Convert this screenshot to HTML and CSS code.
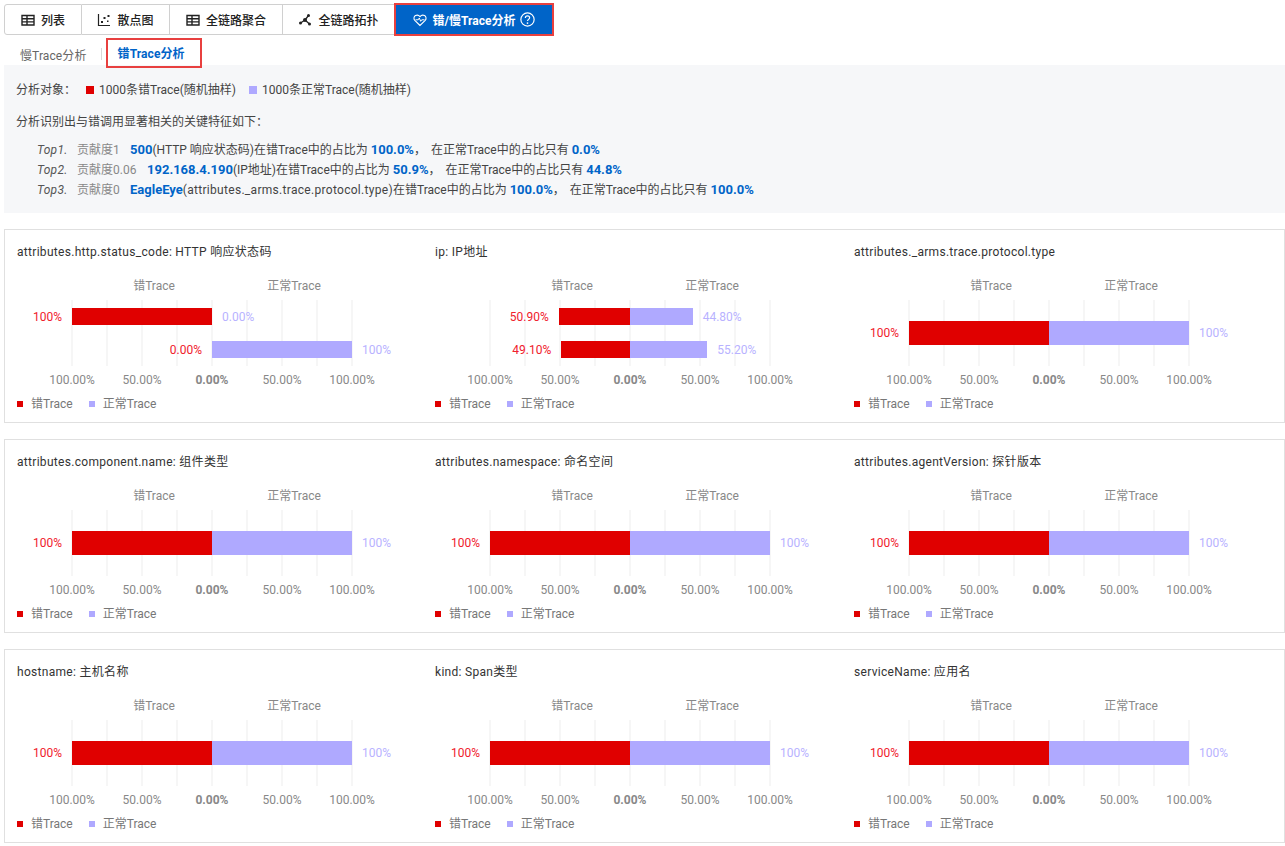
FILE: index.html
```html
<!DOCTYPE html>
<html lang="zh-CN">
<head>
    <meta charset="UTF-8">
    <title>错/慢Trace分析</title>
    <link rel="stylesheet" href="styles.css">
</head>
<body>
    <svg class="defs" width="0" height="0">
        <symbol id="i-table" viewBox="0 0 14 14">
            <path d="M1 2.500h12v9.500H1zM1 5.800h12M1 8.900h12M6 2.500V12" fill="none" stroke="#222" stroke-width="1.400"/>
        </symbol>
    </svg>
    <nav class="tabs">
        <a class="tab tab-list"><svg class="icon"><use href="#i-table"/></svg>列表</a>
        <a class="tab tab-scatter">
            <svg class="icon" viewBox="0 0 14 14"><path d="M1.500 1v11.500H13" fill="none" stroke="#222" stroke-width="1.200"/><path d="M4 8h2v2H4zM6.500 4h2v2h-2zM10.500 2h2v2h-2zM10 7.500h1.500V9H10z" fill="#222"/></svg>散点图
        </a>
        <a class="tab tab-agg"><svg class="icon"><use href="#i-table"/></svg>全链路聚合</a>
        <a class="tab tab-topo">
            <svg class="icon" viewBox="0 0 14 14"><path d="M7 7L10.500 2.500M7 7L2.500 10M7 7l4.500 4" stroke="#222" stroke-width="1.300"/><circle cx="7" cy="7" r="2" fill="#222"/><circle cx="10.500" cy="2.500" r="1.500" fill="#222"/><circle cx="2.500" cy="10" r="1.500" fill="#222"/><circle cx="11.500" cy="11" r="1.500" fill="#222"/></svg>全链路拓扑
        </a>
        <a class="tab tab-active">
            <svg class="icon" viewBox="0 0 14 14"><path d="M7 12.500L1.800 7.400C.4 5.900.8 3.500 2.500 2.600 4.100 1.800 5.800 2.200 7 3.600 8.200 2.200 9.900 1.800 11.500 2.600c1.700.9 2.100 3.300.7 4.800z" fill="none" stroke="#fff" stroke-width="1.100"/><path d="M2.500 6.800h2.700L6.300 5l1.400 3.300 1-1.500h2.800" fill="none" stroke="#fff" stroke-width="1"/></svg>错/慢Trace分析
            <svg class="icon icon-help" viewBox="0 0 14 14"><circle cx="7" cy="7" r="6.200" fill="none" stroke="#fff" stroke-width="1.100"/><path d="M5 5.500C5 4.300 5.900 3.600 7 3.600s2 .7 2 1.800c0 1.500-2 1.500-2 3.100" fill="none" stroke="#fff" stroke-width="1.100"/><circle cx="7" cy="10.300" r=".8" fill="#fff"/></svg>
        </a>
    </nav>

    <div class="subtabs">
        <a class="subtab">慢Trace分析</a>
        <span class="subtab-sep"></span>
        <a class="subtab subtab-active">错Trace分析</a>
    </div>

    <section class="summary">
        <p class="summary-line">分析对象：
            <span class="swatch swatch-err"></span>1000条错Trace(随机抽样)
            <span class="swatch swatch-ok"></span>1000条正常Trace(随机抽样)
        </p>
        <p class="summary-line">分析识别出与错调用显著相关的关键特征如下：</p>
        <ul class="tops">
            <li><i>Top1.</i><span class="score score-1">贡献度1</span><b>500</b>(HTTP 响应状态码)在错Trace中的占比为 <b>100.0%</b><span class="comma">，</span>在正常Trace中的占比只有 <b>0.0%</b></li>
            <li><i>Top2.</i><span class="score score-2">贡献度0.06</span><b>192.168.4.190</b>(IP地址)在错Trace中的占比为 <b>50.9%</b><span class="comma">，</span>在正常Trace中的占比只有 <b>44.8%</b></li>
            <li><i>Top3.</i><span class="score score-1">贡献度0</span><b>EagleEye</b><span class="attr">(attributes._arms.trace.protocol.type)</span>在错Trace中的占比为 <b>100.0%</b><span class="comma">，</span>在正常Trace中的占比只有 <b>100.0%</b></li>
        </ul>
    </section>

    <section class="card">
        <div class="chart">
            <h4>attributes.http.status_code: HTTP 响应状态码</h4>
            <div class="series"><span>错Trace</span><span>正常Trace</span></div>
            <div class="plot">
                <div class="row">
                    <div class="half half-err"><span class="val">100%</span><div class="bar" style="width:100%"></div></div>
                    <div class="half half-ok"><div class="bar" style="width:0%"></div><span class="val">0.00%</span></div>
                </div>
                <div class="row">
                    <div class="half half-err"><span class="val">0.00%</span><div class="bar" style="width:0%"></div></div>
                    <div class="half half-ok"><div class="bar" style="width:100%"></div><span class="val">100%</span></div>
                </div>
            </div>
            <div class="axis"><span>100.00%</span><span>50.00%</span><b>0.00%</b><span>50.00%</span><span>100.00%</span></div>
            <div class="legend"><span class="swatch swatch-err"></span>错Trace<span class="swatch swatch-ok"></span>正常Trace</div>
        </div>
        <div class="chart">
            <h4>ip: IP地址</h4>
            <div class="series"><span>错Trace</span><span>正常Trace</span></div>
            <div class="plot">
                <div class="row">
                    <div class="half half-err"><span class="val">50.90%</span><div class="bar" style="width:50.9%"></div></div>
                    <div class="half half-ok"><div class="bar" style="width:44.8%"></div><span class="val">44.80%</span></div>
                </div>
                <div class="row">
                    <div class="half half-err"><span class="val">49.10%</span><div class="bar" style="width:49.1%"></div></div>
                    <div class="half half-ok"><div class="bar" style="width:55.2%"></div><span class="val">55.20%</span></div>
                </div>
            </div>
            <div class="axis"><span>100.00%</span><span>50.00%</span><b>0.00%</b><span>50.00%</span><span>100.00%</span></div>
            <div class="legend"><span class="swatch swatch-err"></span>错Trace<span class="swatch swatch-ok"></span>正常Trace</div>
        </div>
        <div class="chart">
            <h4>attributes._arms.trace.protocol.type</h4>
            <div class="series"><span>错Trace</span><span>正常Trace</span></div>
            <div class="plot plot-single">
                <div class="row">
                    <div class="half half-err"><span class="val">100%</span><div class="bar" style="width:100%"></div></div>
                    <div class="half half-ok"><div class="bar" style="width:100%"></div><span class="val">100%</span></div>
                </div>
            </div>
            <div class="axis"><span>100.00%</span><span>50.00%</span><b>0.00%</b><span>50.00%</span><span>100.00%</span></div>
            <div class="legend"><span class="swatch swatch-err"></span>错Trace<span class="swatch swatch-ok"></span>正常Trace</div>
        </div>
    </section>

    <section class="card">
        <div class="chart">
            <h4>attributes.component.name: 组件类型</h4>
            <div class="series"><span>错Trace</span><span>正常Trace</span></div>
            <div class="plot plot-single">
                <div class="row">
                    <div class="half half-err"><span class="val">100%</span><div class="bar" style="width:100%"></div></div>
                    <div class="half half-ok"><div class="bar" style="width:100%"></div><span class="val">100%</span></div>
                </div>
            </div>
            <div class="axis"><span>100.00%</span><span>50.00%</span><b>0.00%</b><span>50.00%</span><span>100.00%</span></div>
            <div class="legend"><span class="swatch swatch-err"></span>错Trace<span class="swatch swatch-ok"></span>正常Trace</div>
        </div>
        <div class="chart">
            <h4>attributes.namespace: 命名空间</h4>
            <div class="series"><span>错Trace</span><span>正常Trace</span></div>
            <div class="plot plot-single">
                <div class="row">
                    <div class="half half-err"><span class="val">100%</span><div class="bar" style="width:100%"></div></div>
                    <div class="half half-ok"><div class="bar" style="width:100%"></div><span class="val">100%</span></div>
                </div>
            </div>
            <div class="axis"><span>100.00%</span><span>50.00%</span><b>0.00%</b><span>50.00%</span><span>100.00%</span></div>
            <div class="legend"><span class="swatch swatch-err"></span>错Trace<span class="swatch swatch-ok"></span>正常Trace</div>
        </div>
        <div class="chart">
            <h4>attributes.agentVersion: 探针版本</h4>
            <div class="series"><span>错Trace</span><span>正常Trace</span></div>
            <div class="plot plot-single">
                <div class="row">
                    <div class="half half-err"><span class="val">100%</span><div class="bar" style="width:100%"></div></div>
                    <div class="half half-ok"><div class="bar" style="width:100%"></div><span class="val">100%</span></div>
                </div>
            </div>
            <div class="axis"><span>100.00%</span><span>50.00%</span><b>0.00%</b><span>50.00%</span><span>100.00%</span></div>
            <div class="legend"><span class="swatch swatch-err"></span>错Trace<span class="swatch swatch-ok"></span>正常Trace</div>
        </div>
    </section>

    <section class="card">
        <div class="chart">
            <h4>hostname: 主机名称</h4>
            <div class="series"><span>错Trace</span><span>正常Trace</span></div>
            <div class="plot plot-single">
                <div class="row">
                    <div class="half half-err"><span class="val">100%</span><div class="bar" style="width:100%"></div></div>
                    <div class="half half-ok"><div class="bar" style="width:100%"></div><span class="val">100%</span></div>
                </div>
            </div>
            <div class="axis"><span>100.00%</span><span>50.00%</span><b>0.00%</b><span>50.00%</span><span>100.00%</span></div>
            <div class="legend"><span class="swatch swatch-err"></span>错Trace<span class="swatch swatch-ok"></span>正常Trace</div>
        </div>
        <div class="chart">
            <h4>kind: Span类型</h4>
            <div class="series"><span>错Trace</span><span>正常Trace</span></div>
            <div class="plot plot-single">
                <div class="row">
                    <div class="half half-err"><span class="val">100%</span><div class="bar" style="width:100%"></div></div>
                    <div class="half half-ok"><div class="bar" style="width:100%"></div><span class="val">100%</span></div>
                </div>
            </div>
            <div class="axis"><span>100.00%</span><span>50.00%</span><b>0.00%</b><span>50.00%</span><span>100.00%</span></div>
            <div class="legend"><span class="swatch swatch-err"></span>错Trace<span class="swatch swatch-ok"></span>正常Trace</div>
        </div>
        <div class="chart">
            <h4>serviceName: 应用名</h4>
            <div class="series"><span>错Trace</span><span>正常Trace</span></div>
            <div class="plot plot-single">
                <div class="row">
                    <div class="half half-err"><span class="val">100%</span><div class="bar" style="width:100%"></div></div>
                    <div class="half half-ok"><div class="bar" style="width:100%"></div><span class="val">100%</span></div>
                </div>
            </div>
            <div class="axis"><span>100.00%</span><span>50.00%</span><b>0.00%</b><span>50.00%</span><span>100.00%</span></div>
            <div class="legend"><span class="swatch swatch-err"></span>错Trace<span class="swatch swatch-ok"></span>正常Trace</div>
        </div>
    </section>
</body>
</html>
```

FILE: styles.css
```css
html{
    font-family: Roboto, "Noto Sans CJK SC", sans-serif;
    font-size: 12px;
    color: #333;
}
body{
    margin: 0;
    padding: 4px 0 0 4px;
    background: #fff;
}
.defs{
    position: absolute;
}
.icon{
    width: 14px;
    height: 14px;
    margin-right: 6px;
    flex-shrink: 0;
}

/* tabs */
.tabs{
    display: flex;
    height: 31px;
}
.tab{
    display: flex;
    align-items: center;
    justify-content: center;
    box-sizing: border-box;
    border: 1px solid #d0d0d0;
    border-left: none;
    color: #222;
    font-weight: 500;
}
.tab-list{
    width: 78px;
    border-left: 1px solid #d0d0d0;
    border-radius: 3px 0 0 3px;
}
.tab-scatter{
    width: 88px;
}
.tab-agg{
    width: 113px;
}
.tab-topo{
    width: 112px;
}
.tab-active{
    width: 158px;
    border: none;
    color: #fff;
    font-weight: 700;
    background: #0064c8;
    outline: 2px solid #e8403f;
    outline-offset: -1px;
}
.icon-help{
    width: 15px;
    height: 15px;
    margin: 0 0 0 5px;
}

/* subtabs */
.subtabs{
    display: flex;
    align-items: center;
    height: 30px;
    margin-top: 3px;
    padding-left: 12px;
}
.subtab{
    margin-top: 2px;
    padding: 0 4px;
    color: #666;
    letter-spacing: .1px;
}
.subtab-sep{
    width: 1px;
    height: 12px;
    margin: 2px 4px 0 10px;
    background: #d8d8d8;
}
.subtab-active{
    box-sizing: border-box;
    width: 96px;
    height: 30px;
    margin-top: 0;
    padding: 0 10px;
    line-height: 28px;
    border: 2px solid #e8403f;
    color: #0064c8;
    font-weight: 700;
    position: relative;
}

/* summary */
.summary{
    height: 148px;
    margin-top: -3px;
    padding: 1px 12px 0;
    box-sizing: border-box;
    background: #f6f7f9;
    overflow: hidden;
}
.summary-line{
    margin: 16px 0 0;
    line-height: 16px;
    color: #444;
}
.swatch{
    display: inline-block;
    width: 8px;
    height: 8px;
    margin: 0 5px 0 7px;
}
.summary-line .swatch-ok{
    margin-left: 10px;
}
.swatch-err{
    background: #e00000;
}
.swatch-ok{
    background: #afa9ff;
}
.tops{
    list-style: none;
    margin: 10px 0 0;
    padding: 0 0 0 21px;
    color: #444;
}
.tops li{
    height: 20px;
    line-height: 20px;
    white-space: nowrap;
}
.tops i{
    display: inline-block;
    width: 40px;
    color: #555;
    letter-spacing: .3px;
}
.tops b{
    font-size: 13px;
    color: #0064c8;
}
.score{
    display: inline-block;
    color: #888;
}
.score-1{
    width: 53px;
}
.score-2{
    width: 70px;
}
.attr{
    letter-spacing: .3px;
}
.comma{
    display: inline-block;
    width: 17px;
}

/* chart cards */
.card{
    display: grid;
    grid-template-columns: 418px 419px 1fr;
    box-sizing: border-box;
    height: 194px;
    margin-top: 16px;
    padding-left: 12px;
    border: 1px solid #e0e0e0;
}
.chart{
    min-width: 0;
}
.chart h4{
    margin: 14px 0 0;
    font-size: 12px;
    font-weight: 400;
    line-height: 16px;
    letter-spacing: .3px;
    color: #333;
}
.series{
    display: flex;
    width: 280px;
    margin: 18px 0 0 55px;
    line-height: 16px;
    color: #888;
}
.series span{
    width: 140px;
    padding-left: 24px;
    box-sizing: border-box;
    text-align: center;
}
.plot{
    display: flex;
    flex-direction: column;
    justify-content: space-around;
    box-sizing: border-box;
    width: 282px;
    height: 66px;
    margin: 6px 0 0 54px;
    padding: 0 1px;
    background: linear-gradient(to right, #f6f6f6 2px, transparent 2px) 0 0 / 35px 100%;
}
.row{
    display: flex;
    height: 17px;
}
.plot-single .row{
    height: 24px;
}
.half{
    display: flex;
    align-items: center;
    width: 140px;
}
.half-err{
    justify-content: flex-end;
    color: #f0202c;
}
.half-ok{
    color: #b8b2ff;
}
.half-err .bar{
    background: #e00000;
}
.half-ok .bar{
    background: #afa9ff;
}
.bar{
    height: 100%;
    flex-shrink: 0;
}
.val{
    flex-shrink: 0;
    white-space: nowrap;
}
.half-err .val{
    margin-right: 10px;
}
.half-ok .val{
    margin-left: 10px;
}
.axis{
    display: flex;
    width: 350px;
    margin: 6px 0 0 20px;
    line-height: 16px;
    color: #888;
}
.axis span,
.axis b{
    width: 70px;
    text-align: center;
}
.legend{
    display: flex;
    align-items: center;
    margin-top: 8px;
    line-height: 16px;
    color: #777;
}
.legend .swatch{
    width: 6px;
    height: 6px;
    margin: 0 8px 0 0;
}
.legend .swatch-ok{
    margin-left: 16px;
}
```
